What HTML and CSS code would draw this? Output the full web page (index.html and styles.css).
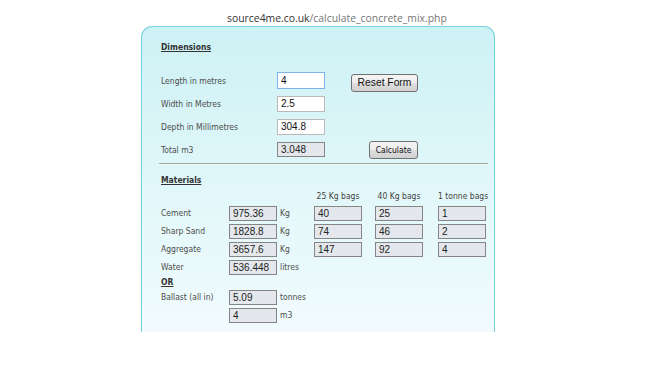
FILE: index.html
```html
<!DOCTYPE html>
<html lang="en">
<head>
    <meta charset="UTF-8">
    <meta name="viewport" content="width=device-width, initial-scale=1.0">
    <title>Concrete Mix Calculator</title>
    <link rel="stylesheet" href="styles.css">
</head>
<body>

<div class="address"><span class="host">source4me.co.uk</span>/calculate_concrete_mix.php</div>

<div class="panel">
    <h3 class="heading">Dimensions</h3>

    <div class="dims">
        <div class="dim-row">
            <label>Length in metres</label>
            <input class="field field-focus" type="text" value="4">
            <button class="btn btn-reset">Reset Form</button>
        </div>
        <div class="dim-row">
            <label>Width in Metres</label>
            <input class="field" type="text" value="2.5">
        </div>
        <div class="dim-row">
            <label>Depth in Millimetres</label>
            <input class="field" type="text" value="304.8">
        </div>
        <div class="dim-row">
            <label>Total m3</label>
            <input class="field readonly" type="text" value="3.048" readonly>
            <button class="btn btn-calc">Calculate</button>
        </div>
    </div>

    <hr class="divider">

    <h3 class="heading heading-mat">Materials</h3>

    <div class="mat-row mat-head">
        <span></span><span></span><span></span>
        <span class="col-title">25 Kg bags</span>
        <span class="col-title">40 Kg bags</span>
        <span class="col-title">1 tonne bags</span>
    </div>
    <div class="mat-row">
        <label>Cement</label>
        <input class="field readonly" value="975.36" readonly>
        <span class="unit">Kg</span>
        <input class="field readonly" value="40" readonly>
        <input class="field readonly" value="25" readonly>
        <input class="field readonly" value="1" readonly>
    </div>
    <div class="mat-row">
        <label>Sharp Sand</label>
        <input class="field readonly" value="1828.8" readonly>
        <span class="unit">Kg</span>
        <input class="field readonly" value="74" readonly>
        <input class="field readonly" value="46" readonly>
        <input class="field readonly" value="2" readonly>
    </div>
    <div class="mat-row">
        <label>Aggregate</label>
        <input class="field readonly" value="3657.6" readonly>
        <span class="unit">Kg</span>
        <input class="field readonly" value="147" readonly>
        <input class="field readonly" value="92" readonly>
        <input class="field readonly" value="4" readonly>
    </div>
    <div class="mat-row">
        <label>Water</label>
        <input class="field readonly" value="536.448" readonly>
        <span class="unit">litres</span>
    </div>

    <div class="or-label">OR</div>

    <div class="mat-row">
        <label>Ballast (all in)</label>
        <input class="field readonly" value="5.09" readonly>
        <span class="unit">tonnes</span>
    </div>
    <div class="mat-row">
        <span></span>
        <input class="field readonly" value="4" readonly>
        <span class="unit">m3</span>
    </div>
</div>

</body>
</html>
```

FILE: styles.css
```css
body {
    margin: 0;
    background: #fff;
    font-family: "DejaVu Sans Condensed", "DejaVu Sans", sans-serif;
    font-stretch: condensed;
    font-size: 8.5px;
    color: #4d4d4d;
}
.address {
    padding: 11px 0 0 227px;
    height: 15px;
    font-family: "Open Sans", "Noto Sans", sans-serif;
    font-stretch: normal;
    font-size: 10.4px;
    line-height: 15px;
    color: #777;
}
.host {
    color: #333;
}
.panel {
    box-sizing: border-box;
    width: 354px;
    height: 306px;
    margin-left: 141px;
    padding: 14px 0 0 19px;
    border: 1px solid #79d2df;
    border-bottom: none;
    border-radius: 11px 11px 0 0;
    background: linear-gradient(#cdf1f5, #e4f8fa 60%, #f1fbfd);
}
.heading {
    margin: 0;
    height: 12px;
    line-height: 12px;
    font-size: 8.5px;
    font-weight: bold;
    color: #333;
    text-decoration: underline;
}
.dims {
    margin-top: 16px;
}
.dim-row {
    display: grid;
    grid-template-columns: 116px 48px 93px;
    align-items: center;
    height: 23px;
}
.field {
    box-sizing: border-box;
    width: 48px;
    height: 16px;
    margin: 0;
    padding: 0 3px;
    border: 1px solid #b9b9b9;
    background: #fff;
    font-family: "Liberation Sans", Arial, sans-serif;
    font-size: 10px;
    color: #111;
    outline: none;
}
.field-focus {
    height: 17px;
    border-color: #7eb4ea;
}
.readonly {
    height: 15px;
    border-color: #858585;
    background: #e4e8ec;
    color: #222;
}
.btn {
    justify-self: end;
    box-sizing: border-box;
    height: 18px;
    padding: 0;
    border: 1px solid #707070;
    border-radius: 3px;
    background: linear-gradient(#f4f4f4, #ececec 50%, #dedede 50%, #d1d1d1);
    color: #111;
}
.btn-reset {
    width: 67px;
    margin-top: 4px;
    font-family: "Liberation Sans", Arial, sans-serif;
    font-size: 10.3px;
}
.btn-calc {
    width: 49px;
    font-family: "DejaVu Sans Condensed", "DejaVu Sans", sans-serif;
    font-stretch: condensed;
    font-size: 8.5px;
}
.divider {
    width: 329px;
    margin: 2px 0 0 -2px;
    border: none;
    border-top: 1px solid #a3a3a3;
    border-bottom: 1px solid #f4fcfd;
}
.heading-mat {
    margin-top: 9px;
}
.mat-row {
    display: grid;
    grid-template-columns: 68px 48px 37px 61px 63px 48px;
    align-items: center;
    height: 18px;
}
.mat-head {
    height: 12px;
    margin-top: 4px;
    margin-bottom: 2px;
}
.col-title {
    width: 48px;
    text-align: center;
    white-space: nowrap;
    color: #444;
}
.unit {
    padding-left: 3px;
}
.or-label {
    height: 12px;
    line-height: 12px;
    font-weight: bold;
    color: #333;
    text-decoration: underline;
}
```
